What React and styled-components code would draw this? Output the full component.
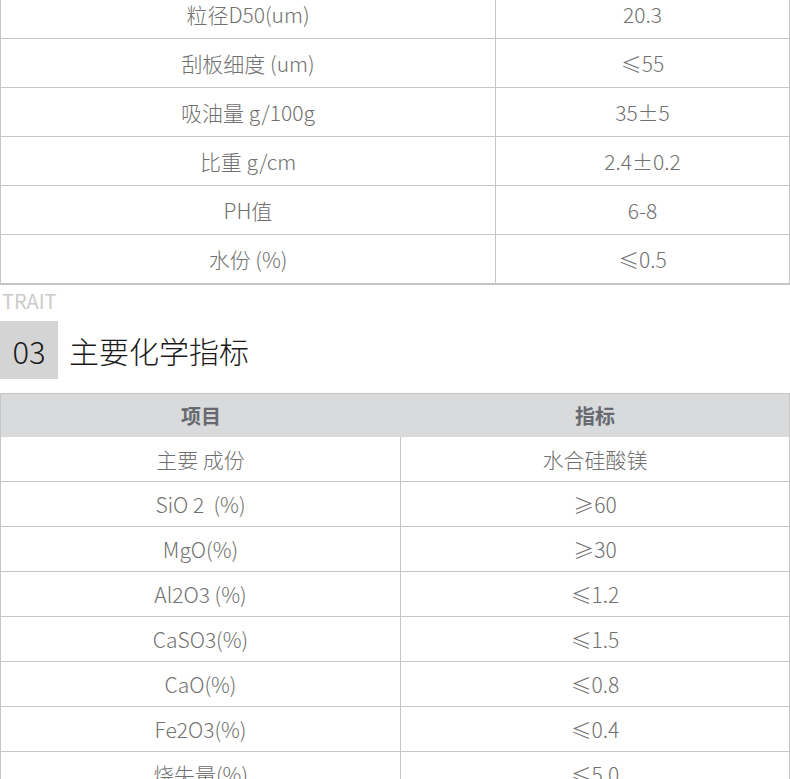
import styled, { createGlobalStyle } from "styled-components";

const GlobalStyle = createGlobalStyle`
  html, body {
    margin: 0;
    padding: 0;
    background: #ffffff;
    overflow: hidden;
  }
  body {
    font-family: "Noto Sans CJK SC", "Noto Sans", sans-serif;
  }
`;

const Page = styled.div`
  width: 790px;
  margin-top: -10px;
`;

const Table = styled.div`
  display: grid;
  grid-template-columns: ${(props) => props.$cols};
  border: 1px solid #c6c6c6;
  border-top: none;
  box-sizing: border-box;
  width: 790px;
`;

const Cell = styled.div`
  height: ${(props) => props.$h}px;
  display: flex;
  align-items: center;
  justify-content: center;
  border-bottom: 1px solid #c6c6c6;
  border-right: ${(props) => (props.$last ? "none" : "1px solid #c6c6c6")};
  font-size: 21px;
  font-weight: 300;
  color: #707070;
  white-space: pre;
`;

const HeadRow = styled.div`
  grid-column: 1 / -1;
  display: grid;
  grid-template-columns: ${(props) => props.$cols};
  background: #d9dadc;
  border-top: 1px solid #c6c6c6;
  height: 43px;
`;

const HeadCell = styled.div`
  display: flex;
  align-items: center;
  justify-content: center;
  font-size: 20px;
  font-weight: 700;
  color: #666a70;
`;

const Trait = styled.div`
  margin-top: 4px;
  padding-left: 2px;
  font-size: 20px;
  line-height: 24px;
  color: #cbcbcb;
`;

const TitleRow = styled.div`
  display: flex;
  align-items: center;
  gap: 11px;
  margin-top: 8px;
  margin-bottom: 14px;
`;

const Num = styled.div`
  width: 58px;
  height: 58px;
  background: #d4d4d4;
  display: flex;
  align-items: center;
  justify-content: center;
  font-size: 31px;
  font-weight: 300;
  color: #1a1a1a;
`;

const Title = styled.h2`
  margin: 0;
  font-size: 30px;
  font-weight: 300;
  color: #1a1a1a;
`;

const physical = [
  ["粒径D50(um)", "20.3"],
  ["刮板细度 (um)", "≤55"],
  ["吸油量 g/100g", "35±5"],
  ["比重 g/cm", "2.4±0.2"],
  ["PH值", "6-8"],
  ["水份 (%)", "≤0.5"],
];

const chemical = [
  ["主要 成份", "水合硅酸镁"],
  ["SiO 2  (%)", "≥60"],
  ["MgO(%)", "≥30"],
  ["Al2O3 (%)", "≤1.2"],
  ["CaSO3(%)", "≤1.5"],
  ["CaO(%)", "≤0.8"],
  ["Fe2O3(%)", "≤0.4"],
  ["烧失量(%)", "≤5.0"],
];

export default function App() {
  return (
    <>
      <GlobalStyle />
      <Page>
        <Table $cols="495px 1fr">
          {physical.map(([k, v]) => [
            <Cell key={k} $h={48}>{k}</Cell>,
            <Cell key={k + "v"} $h={48} $last>{v}</Cell>,
          ])}
        </Table>
        <Trait>TRAIT</Trait>
        <TitleRow>
          <Num>03</Num>
          <Title>主要化学指标</Title>
        </TitleRow>
        <Table $cols="400px 1fr">
          <HeadRow $cols="400px 1fr">
            <HeadCell>项目</HeadCell>
            <HeadCell>指标</HeadCell>
          </HeadRow>
          {chemical.map(([k, v]) => [
            <Cell key={k} $h={44}>{k}</Cell>,
            <Cell key={k + "v"} $h={44} $last>{v}</Cell>,
          ])}
        </Table>
      </Page>
    </>
  );
}
